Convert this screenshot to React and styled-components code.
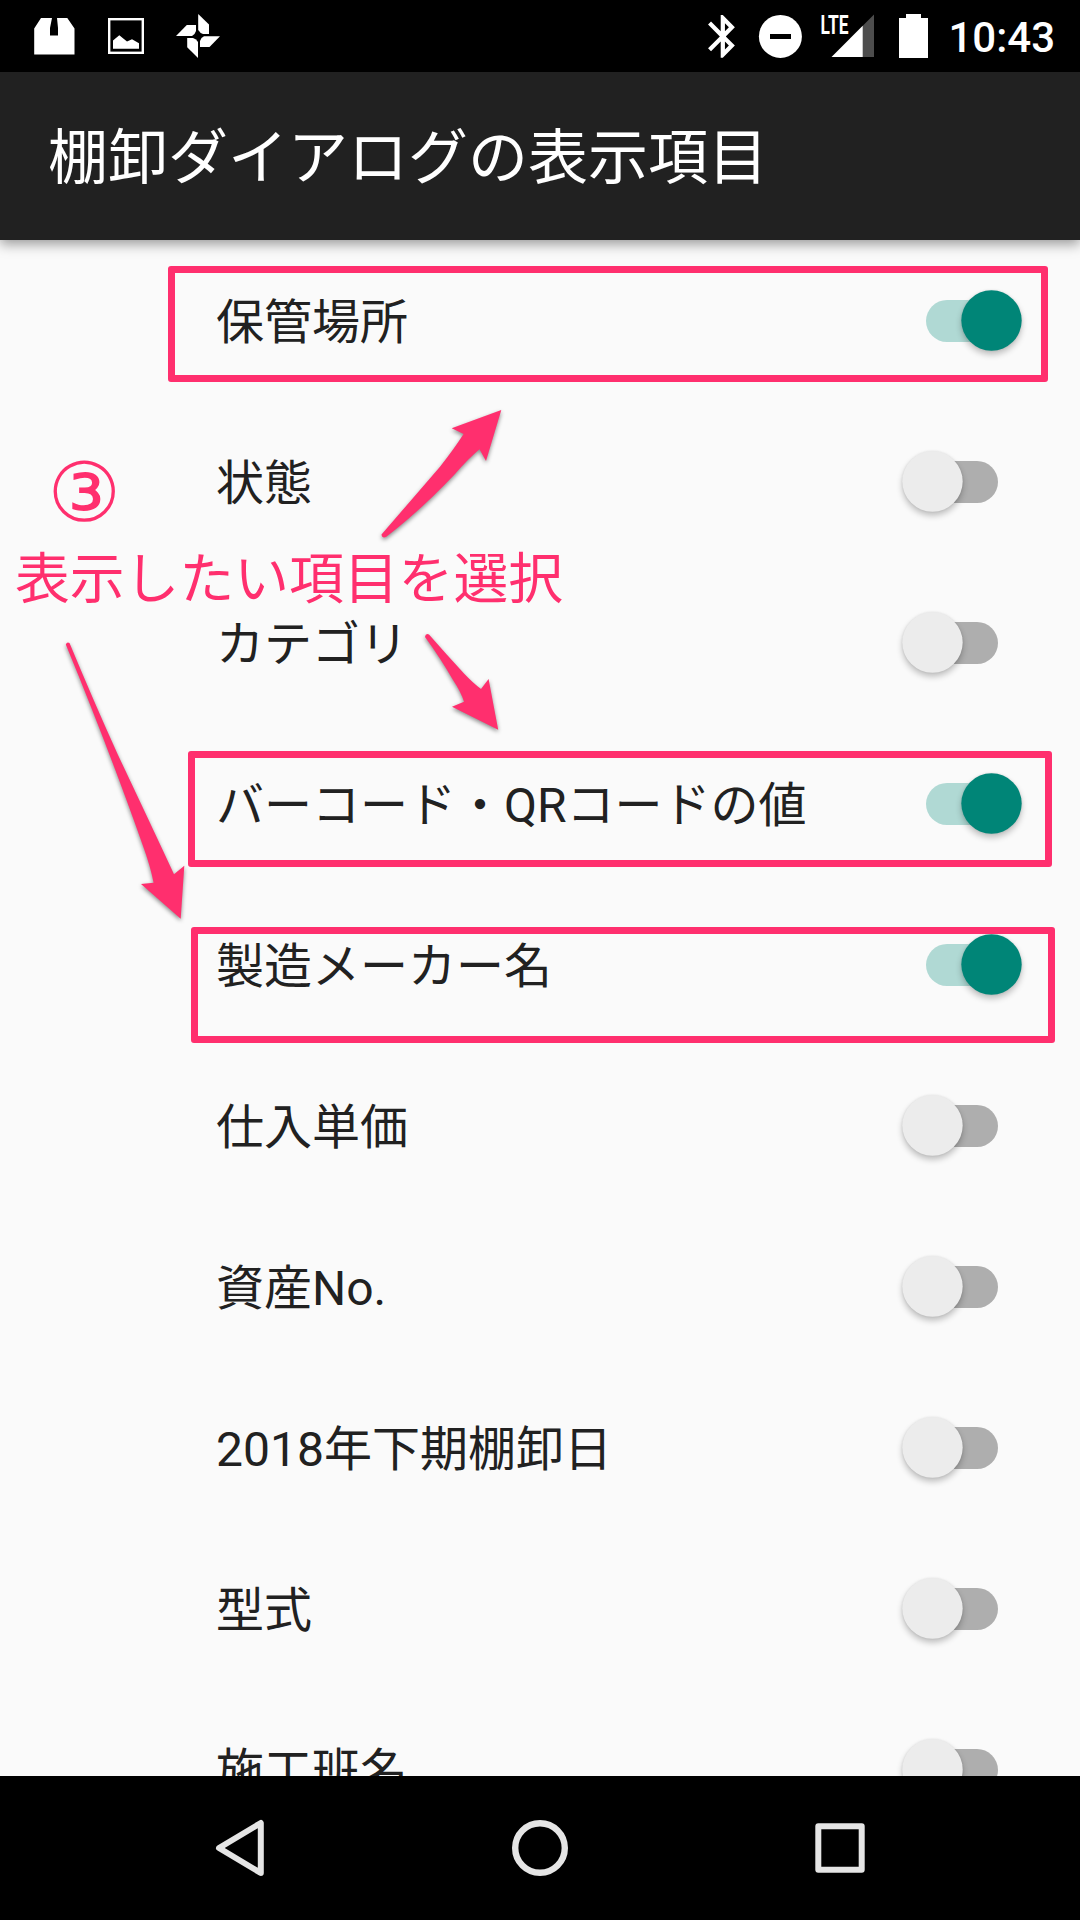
import React from 'react';
import styled, { createGlobalStyle } from 'styled-components';

const PINK = '#ff2f6e';

const GlobalStyle = createGlobalStyle`
	* {
		box-sizing: border-box;
	}

	body {
		margin: 0;
		background: #fafafa;
		font-family: Roboto, 'Noto Sans CJK JP', sans-serif;
	}
`;

const Screen = styled.div`
	position: relative;
	display: flex;
	flex-direction: column;
	width: 1080px;
	height: 1920px;
	overflow: hidden;
	background: #fafafa;
`;

const StatusBar = styled.div`
	display: flex;
	justify-content: space-between;
	height: 72px;
	flex: none;
	padding: 0 25px 0 34px;
	background: #000000;
	color: #ffffff;
`;

const StatusGroup = styled.div`
	display: flex;
	align-items: center;
`;

const Clock = styled.span`
	font-size: 42px;
	font-weight: 500;
	line-height: 72px;
	padding-top: 3px;
	margin-left: 19px;
`;

const Header = styled.header`
	position: relative;
	z-index: 1;
	display: flex;
	align-items: center;
	height: 168px;
	flex: none;
	padding: 6px 48px 0;
	background: #212121;
	box-shadow: 0 4px 12px rgba(0, 0, 0, 0.4);
`;

const Title = styled.h1`
	margin: 0;
	color: #ffffff;
	font-size: 60px;
	font-weight: 400;
	line-height: 84px;
`;

const List = styled.ul`
	flex: 1;
	min-height: 0;
	margin: 0;
	padding: 0;
	overflow: hidden;
	list-style: none;
`;

const Row = styled.li`
	display: flex;
	align-items: center;
	justify-content: space-between;
	height: 161px;
	padding: 0 58px 0 216px;
`;

const Label = styled.span`
	padding-top: 5px;
	color: #212121;
	font-size: 48px;
	line-height: 70px;
`;

const Switch = styled.span`
	position: relative;
	display: flex;
	align-items: center;
	justify-content: ${props => (props.$on ? 'flex-end' : 'flex-start')};
	width: 120px;
	height: 61px;

	&::before {
		content: '';
		position: absolute;
		left: 24px;
		top: 10px;
		width: 72px;
		height: 42px;
		border-radius: 21px;
		background: ${props => (props.$on ? '#b0d9d4' : '#aeaeae')};
	}
`;

const Thumb = styled.span`
	position: relative;
	width: 61px;
	height: 61px;
	border-radius: 50%;
	transform: scale(0.99);
	background: ${props => (props.$on ? '#008577' : '#ececec')};
	box-shadow: 0 4px 6px rgba(0, 0, 0, 0.24), 0 0 3px rgba(0, 0, 0, 0.1);
`;

const NavBar = styled.nav`
	display: flex;
	flex: none;
	height: 144px;
	padding: 0 90px;
	background: #000000;
`;

const NavButton = styled.div`
	display: flex;
	flex: 1;
	align-items: center;
	justify-content: center;
`;

const Frame = styled.div`
	position: absolute;
	z-index: 2;
	left: ${props => props.$x}px;
	top: ${props => props.$y}px;
	width: ${props => props.$w}px;
	height: 116px;
	border: 7px solid ${PINK};
	border-radius: 3px;
`;

const Note = styled.div`
	position: absolute;
	z-index: 2;
	left: ${props => props.$x}px;
	top: ${props => props.$y}px;
	color: ${PINK};
	font-family: 'Noto Sans CJK JP', sans-serif;
	font-size: 54.8px;
	line-height: 80px;
	white-space: nowrap;
`;

const StepNumber = styled(Note)`
	font-family: 'DejaVu Sans', 'Noto Sans CJK JP', sans-serif;
	font-size: 82px;
`;

const Arrows = styled.svg`
	position: absolute;
	z-index: 2;
	left: 0;
	top: 0;
	filter: drop-shadow(0 2px 2px rgba(0, 0, 0, 0.45));
`;

const items = [
	{ label: '保管場所', on: true },
	{ label: '状態', on: false },
	{ label: 'カテゴリ', on: false },
	{ label: 'バーコード・QRコードの値', on: true },
	{ label: '製造メーカー名', on: true },
	{ label: '仕入単価', on: false },
	{ label: '資産No.', on: false },
	{ label: '2018年下期棚卸日', on: false },
	{ label: '型式', on: false },
	{ label: '施工班名', on: false }
];

const NotificationIcons = () => (
	<svg width="190" height="72" viewBox="34 0 190 72" fill="#ffffff">
		<path d="M41 18H52L50 28V35.5H58V28L57 18H67.3L74.5 28.5V54.6H34.2V28.5Z" />
		<rect x="109.2" y="19.2" width="33.6" height="33.6" fill="none" stroke="#ffffff" strokeWidth="2.4" />
		<path d="M113 40.5L119.3 35.3L127 41.5L132 39.3L139 43.2V48.8H113Z" />
		<path d="M198.2 14L209 24.5V34H203Q200 33 198.2 30Z" />
		<path d="M176 36L186.8 25H196V31Q195 34.5 192 36Z" />
		<path d="M198 58L187.2 47.2V38H193Q196.5 39 198 42Z" />
		<path d="M220 36.2L209.5 47H200V41Q201 37.5 204 36.2Z" />
	</svg>
);

const SystemIcons = () => (
	<svg width="224" height="72" viewBox="705 0 224 72" fill="#ffffff">
		<g transform="translate(697.5 10.7) scale(2.11 2.14)">
			<path d="M17.71 7.71L12 2h-1v7.59L6.41 5 5 6.41 10.59 12 5 17.59 6.41 19 11 14.41V22h1l5.71-5.71-4.3-4.29 4.3-4.29zM13 5.83l1.88 1.88L13 9.59V5.83zm1.88 10.46L13 18.17v-3.76l1.88 1.88z" />
		</g>
		<circle cx="780.4" cy="36.4" r="21.5" />
		<rect x="770" y="34" width="21" height="5" fill="#000000" />
		<text x="820.5" y="33.5" fontSize="26" fontWeight="700" textLength="28" lengthAdjust="spacingAndGlyphs">
			LTE
		</text>
		<path d="M874 14.5V57H862V26.5Z" fill="#4d4d4d" />
		<path d="M862.7 25.8V57H831.5Z" />
		<path d="M906 14H921V18H928V58H899V18H906Z" />
	</svg>
);

const ArrowMarks = () => (
	<Arrows width="1080" height="1920" viewBox="0 0 1080 1920" fill={PINK}>
		<path d="M501.3 410L486 461L479.5 449.3Q468 459 455 474Q420 511 386 537Q382 538.5 381.5 534.5Q407 505 440 466.7Q454 449 463.6 434L451.7 428.3Z" />
		<path d="M498.2 729.7L452 706.7L464 701.7Q461 692 453 680Q441 659 425 637Q425.5 633 429 634.5Q446 654 464 673.5Q473 683 481 689L488.6 679Z" />
		<path d="M180.7 918.7L141 884L153.6 882.7Q150 865 143 846Q110 752 65.8 644.5Q67 641.5 69.5 643Q94 702 118 755Q153 829 174 874.3L184.3 865.7Z" />
	</Arrows>
);

export default () => (
	<>
		<GlobalStyle />
		<Screen>
			<StatusBar>
				<StatusGroup>
					<NotificationIcons />
				</StatusGroup>
				<StatusGroup>
					<SystemIcons />
					<Clock>10:43</Clock>
				</StatusGroup>
			</StatusBar>
			<Header>
				<Title>棚卸ダイアログの表示項目</Title>
			</Header>
			<List>
				{items.map(({ label, on }) => (
					<Row key={label}>
						<Label>{label}</Label>
						<Switch $on={on}>
							<Thumb $on={on} />
						</Switch>
					</Row>
				))}
			</List>
			<NavBar>
				<NavButton>
					<svg width="56" height="60" viewBox="0 0 56 60" fill="none" stroke="#e5e5e5" strokeWidth="6" strokeLinejoin="round">
						<path d="M48.8 5V55L7 30Z" />
					</svg>
				</NavButton>
				<NavButton>
					<svg width="60" height="60" viewBox="0 0 60 60" fill="none" stroke="#e5e5e5" strokeWidth="6.4">
						<circle cx="30" cy="30" r="24.8" />
					</svg>
				</NavButton>
				<NavButton>
					<svg width="60" height="60" viewBox="0 0 60 60" fill="none" stroke="#e5e5e5" strokeWidth="6" strokeLinejoin="round">
						<rect x="8.3" y="8.3" width="43.4" height="43.4" />
					</svg>
				</NavButton>
			</NavBar>

			<Frame $x={168} $y={266} $w={880} />
			<Frame $x={188} $y={751} $w={864} />
			<Frame $x={191} $y={927} $w={864} />
			<StepNumber $x={47.5} $y={453}>③</StepNumber>
			<Note $x={15} $y={534}>表示したい項目を選択</Note>
			<ArrowMarks />
		</Screen>
	</>
);
